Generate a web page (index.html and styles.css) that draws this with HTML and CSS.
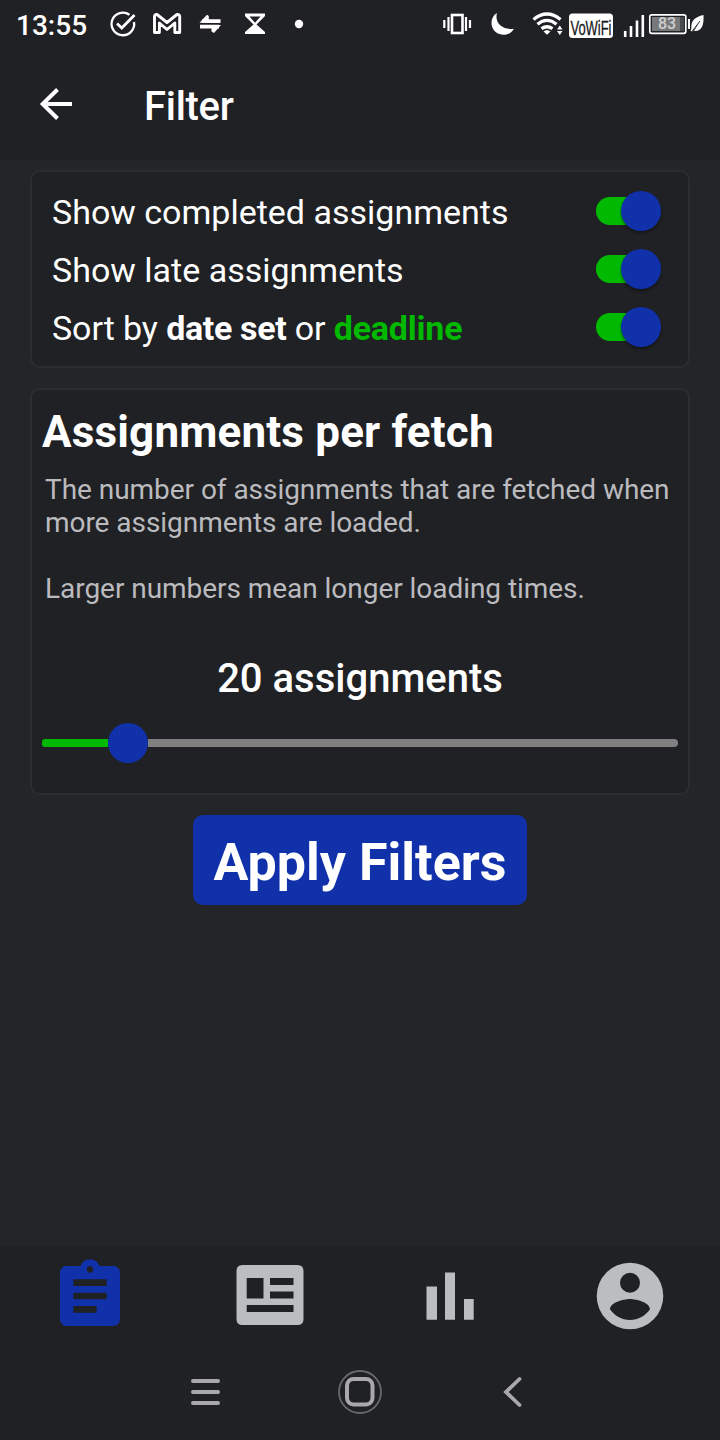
FILE: index.html
```html
<!DOCTYPE html>
<html lang="en">
<head>
<meta charset="utf-8">
<title>Filter</title>
<link rel="stylesheet" href="styles.css">
</head>
<body>
<div class="screen">
  <div class="status">
    <span class="clock">13:55</span>
    <svg class="left-icons" width="210" height="48" viewBox="100 0 210 48" fill="none" stroke="#fff">
      <path d="M129.500 14.800A11.300 11.300 0 1 0 134 22" stroke-width="2.300"/>
      <path d="M117 23.500l4.800 4.500L134.500 15" stroke-width="2.800"/>
      <path d="M154.500 32.500V16.500Q154.500 14.200 157 14.500L167 22.500L177 14.500Q179.700 14.200 179.700 16.500V32.500H174.800V23L167 29.500L159.400 23V32.500Z" stroke-width="2.900" stroke-linejoin="round"/>
      <path d="M202 21.200H220.500M200 26.600H219" stroke-width="3.700"/>
      <path d="M199.500 22.800L207 14.800L208.800 16V22.800ZM221 25L214 33L211.500 31.500V25Z" fill="#fff" stroke="none"/>
      <path d="M245 13.500H265V16L256.500 24.500L265 32V34H245V32L253.500 24.500L245 16ZM249.500 16.500L255 22.800L260.500 16.500Z" fill="#fff" fill-rule="evenodd" stroke="none"/>
      <circle cx="299" cy="24" r="4.200" fill="#fff" stroke="none"/>
    </svg>
    <svg class="right-icons" width="280" height="48" viewBox="440 0 280 48" fill="none" stroke="#fff">
      <rect x="452" y="15" width="10.500" height="18" stroke-width="2.600"/>
      <path d="M448.500 17V31M466 17V31" stroke-width="2.200"/>
      <path d="M444.300 20V28M470 20V28" stroke-width="2.200"/>
      <path d="M497 13C488 18 490 34 503 34.800C507.500 35 511.500 33 514 28.700C504 30.500 494 24 497 13Z" fill="#fff" stroke="none"/>
      <path d="M533.500 19.500Q547 8.500 560.500 19.500M537.500 24.300Q547 16.500 556.500 24.300M541.500 28.600Q547 24.800 552.500 28.600" stroke-width="3.300"/>
      <path d="M543.500 31.500Q547 28.500 550.500 31.500L547 34.800Z" fill="#fff" stroke="none"/>
      <path d="M557 29.500L559.800 25.500L562.500 29.500ZM557 31L559.800 35L562.500 31Z" fill="#fff" stroke="none"/>
      <rect x="569" y="13.500" width="44" height="24.500" rx="3.500" fill="#fff" stroke="none"/>
      <text x="570.500" y="34.800" textLength="41" lengthAdjust="spacingAndGlyphs" class="vowifi">VoWiFi</text>
      <path d="M625.200 31V37M631 26V37M637 20.500V37M642.800 15V37" stroke-width="2.600"/>
      <rect x="649.800" y="14.800" width="36" height="18.500" rx="2" stroke-width="1.700"/>
      <rect x="652" y="17" width="28.500" height="14" fill="#77787a" stroke="none"/>
      <rect x="680.500" y="17" width="3.500" height="14" fill="#48494c" stroke="none"/>
      <text x="667" y="29.200" text-anchor="middle" class="battery">83</text>
      <path d="M689 19V29" stroke-width="2"/>
      <path d="M703.500 15Q690 18 691.500 28L690.500 31L692.500 31.500L700 21.500L694 31Q704.500 32 703.500 15Z" fill="#fff" stroke="none"/>
      <path d="M691.500 32L700 21" stroke="#202124" stroke-width="0.900"/>
    </svg>
  </div>
  <header class="header">
    <svg width="34" height="32" viewBox="39 88 34 32" fill="none" stroke="#fff" stroke-width="4"><path d="M72 104H43M57.500 89.500L42.700 104L57.500 118.500"/></svg>
    <h1>Filter</h1>
  </header>
  <main class="content">
    <section class="card switches">
      <div class="row"><span>Show completed assignments</span><i class="toggle"></i></div>
      <div class="row"><span>Show late assignments</span><i class="toggle"></i></div>
      <div class="row"><span>Sort by <b>date set</b> or <b class="green">deadline</b></span><i class="toggle"></i></div>
    </section>
    <section class="card fetch">
      <h2>Assignments per fetch</h2>
      <p>The number of assignments that are fetched when<br>more assignments are loaded.</p>
      <p>Larger numbers mean longer loading times.</p>
      <div class="amount">20 assignments</div>
      <div class="slider"><i class="filled"></i><i class="knob"></i><i class="rest"></i></div>
    </section>
    <button class="apply">Apply Filters</button>
  </main>
  <nav class="tabs">
    <svg width="80" height="80" viewBox="0 0 24 24" class="active"><path fill-rule="evenodd" d="M19 3H14.820C14.400 1.840 13.300 1 12 1S9.600 1.840 9.180 3H5C3.900 3 3 3.900 3 5V19C3 20.100 3.900 21 5 21H19C20.100 21 21 20.100 21 19V5C21 3.900 20.100 3 19 3ZM12 3C12.550 3 13 3.450 13 4S12.550 5 12 5S11 4.550 11 4S11.450 3 12 3ZM14 17H7V15H14ZM17 13H7V11H17ZM17 9H7V7H17Z"/></svg>
    <svg width="80" height="80" viewBox="230 1255 80 80"><path fill-rule="evenodd" d="M242.500 1265H297.500Q303.500 1265 303.500 1271V1319Q303.500 1325 297.500 1325H242.500Q236.500 1325 236.500 1319V1271Q236.500 1265 242.500 1265ZM246.700 1278V1298.500H263.500V1278ZM270 1278V1285H293.500V1278ZM270 1291.500V1298.500H293.500V1291.500ZM246.700 1305V1312H293.500V1305Z"/></svg>
    <svg width="80" height="80" viewBox="410 1255 80 80"><path d="M426.500 1286.500H437V1319.700H426.500ZM445 1272.500H455V1319.700H445ZM464 1299H473.700V1319.700H464Z"/></svg>
    <svg width="80" height="80" viewBox="590 1255 80 80"><path fill-rule="evenodd" d="M630 1262.700A33.300 33.300 0 1 1 630 1329.300A33.300 33.300 0 1 1 630 1262.700ZM630 1272.700A10 10 0 1 0 630 1292.700A10 10 0 1 0 630 1272.700ZM630 1320C621.700 1320 614.300 1315.700 610 1309.300C610.100 1302.600 623.300 1299 630 1299S649.900 1302.600 650 1309.300C645.700 1315.700 638.300 1320 630 1320Z"/></svg>
  </nav>
  <div class="system">
    <svg width="30" height="28" viewBox="190 1378 30 28" stroke="#a9a9ac" stroke-width="4" stroke-linecap="round"><path d="M193 1381H218M193 1392H218M193 1403H218"/></svg>
    <svg width="46" height="46" viewBox="337 1369 46 46" fill="none"><circle cx="360" cy="1392" r="21" stroke="#68696c" stroke-width="1.800"/><rect x="347" y="1379" width="25.500" height="25.500" rx="6.500" stroke="#a9a9ac" stroke-width="4"/></svg>
    <svg width="20" height="32" viewBox="503 1376 20 32" fill="none" stroke="#a9a9ac" stroke-width="3.800" stroke-linecap="round"><path d="M519.500 1379L506 1392L519.500 1405"/></svg>
  </div>
</div>
</body>
</html>
```
FILE: styles.css
```css
* { box-sizing: border-box; margin: 0; padding: 0; }
body { background: #242529; color: #fff; font-family: Roboto, sans-serif; }
svg { display: block; flex: none; }
.screen { width: 720px; height: 1440px; display: flex; flex-direction: column; overflow: hidden; background: #242529; }
.status { height: 48px; display: flex; background: #202124; }
.clock { width: 84px; margin-left: 16px; font-size: 28px; font-weight: 500; line-height: 51px; white-space: nowrap; }
.right-icons { margin-left: 130px; }
.vowifi { font: 21px "Liberation Sans", sans-serif; fill: #151618; stroke: #151618; stroke-width: 0.3px; }
.battery { font: 500 16px Roboto, sans-serif; fill: #d0d0d0; stroke: none; }
.header { height: 112px; display: flex; align-items: center; padding: 0 0 0 39px; background: #202124; }
.header h1 { margin-left: 71px; padding-top: 6px; font-size: 40px; font-weight: 500; line-height: 48px; letter-spacing: -0.3px; }
.content { flex: 1; display: flex; flex-direction: column; align-items: center; padding-top: 10px; }
.card { width: 660px; border: 2px solid #2c2d31; border-radius: 10px; background: #202124; }
.switches { height: 198px; padding: 10px 27px 10px 20px; }
.row { height: 58px; display: flex; align-items: center; justify-content: space-between; font-size: 34px; white-space: nowrap; }
.row span { padding-top: 2px; }
.row b { letter-spacing: -0.35px; }
.row:last-child span { letter-spacing: -0.1px; }
.toggle { width: 65px; height: 28px; border-radius: 14px; background: linear-gradient(90deg, #00b900 46px, transparent 46px); display: flex; align-items: center; justify-content: flex-end; }
.toggle::after { content: ""; width: 40px; height: 40px; border-radius: 50%; background: #1031aa; box-shadow: 0 2px 3px rgba(0,0,0,.4); flex: none; }
.row .green { color: #00b900; letter-spacing: -0.2px; }
.fetch { height: 407px; margin-top: 20px; padding: 16px 10px 0; }
.fetch h2 { font-size: 44px; line-height: 52px; font-weight: 700; letter-spacing: 0.17px; white-space: nowrap; }
.fetch p { margin: 15px 0 0 3px; color: #bbbbbf; font-size: 28px; line-height: 33px; letter-spacing: -0.045px; white-space: nowrap; }
.fetch p + p { margin-top: 33px; }
.amount { margin-top: 50px; text-align: center; font-size: 40px; font-weight: 500; line-height: 48px; }
.slider { height: 40px; margin-top: 20px; display: flex; align-items: center; }
.filled { width: 66px; height: 8px; border-radius: 3px 0 0 3px; background: #00b900; }
.knob { width: 40px; height: 40px; border-radius: 50%; background: #1031aa; }
.rest { flex: 1; height: 8px; border-radius: 0 4px 4px 0; background: #808080; }
.apply { width: 334px; height: 90px; margin-top: 20px; padding-top: 5px; border: 0; border-radius: 10px; background: #1031aa; color: #fff; font: 700 52px/60px Roboto, sans-serif; white-space: nowrap; }
.tabs { height: 98px; display: grid; grid-template-columns: repeat(4, 1fr); justify-items: center; padding-top: 9px; background: #202124; fill: #bcbdc1; }
.tabs .active { fill: #1031aa; transform: translateY(1px); }
.system { height: 96px; display: flex; align-items: center; padding-left: 190px; background: #202124; }
.system svg:nth-child(2) { margin-left: 117px; }
.system svg:nth-child(3) { margin-left: 120px; }
```
